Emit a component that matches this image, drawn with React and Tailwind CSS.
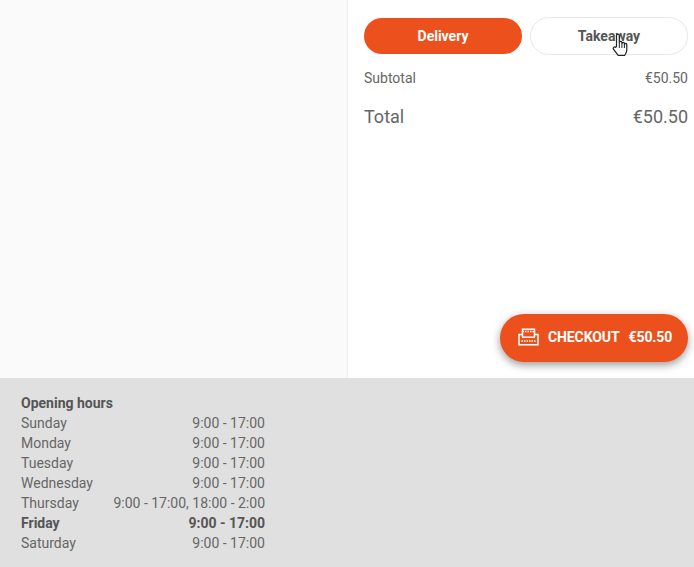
const HOURS = [
  ['Sunday', '9:00 - 17:00'],
  ['Monday', '9:00 - 17:00'],
  ['Tuesday', '9:00 - 17:00'],
  ['Wednesday', '9:00 - 17:00'],
  ['Thursday', '9:00 - 17:00, 18:00 - 2:00'],
  ['Friday', '9:00 - 17:00', true],
  ['Saturday', '9:00 - 17:00'],
]

const HandCursor = () => (
  <svg width="17" height="24" viewBox="0 0 17 24" className="absolute left-[612px] top-[33px]">
    <path
      d="M4.5 13.5V2.6c0-2 2.8-2 2.8 0v7c0-1.6 2.6-1.6 2.6 0v.9c0-1.5 2.5-1.5 2.5 0v1c0-1.4 2.4-1.4 2.4 0v5.2c0 2.8-1.2 4-2 5.6H6.2L1.6 16.4c-1.2-1.6.7-3.2 2-2z"
      fill="#fff"
      stroke="#222"
      strokeWidth="1.2"
      strokeLinejoin="round"
    />
    <path d="M7.3 10v5M9.9 10.5v4.5M12.4 11.5V15" stroke="#222" strokeWidth="1" fill="none" />
  </svg>
)

const RegisterIcon = () => (
  <svg width="21" height="18" viewBox="0 0 21 18" fill="none" stroke="#fff" strokeWidth="1.5">
    <path d="M4.5 9V1.2h12V9" />
    <path d="M4.5 3.5h12" strokeDasharray="1.5 1" />
    <path d="M4.5 6.5H1v10.3h19V6.5h-3.5" />
    <path d="M4 9.2h13" />
    <path d="M3.5 13h14" strokeDasharray="1.5 1" />
  </svg>
)

export default function App() {
  return (
    <div className="relative flex h-[567px] w-[694px] flex-col overflow-hidden bg-white font-['Roboto',sans-serif] text-[#555]">
      <div className="flex h-[378px]">
        <div className="w-[348px] shrink-0 border-r border-[#eeeeee] bg-[#fafafa]" />
        <div className="flex-1 pl-4 pr-[6px] pt-[17px]">
          <div className="grid grid-cols-2 gap-2">
            <button className="mt-px h-[36px] rounded-full bg-[#ec501c] text-sm font-bold text-white">Delivery</button>
            <button className="h-[38px] rounded-full border border-[#e8e8e8] bg-white pb-px text-sm font-bold text-[#555]">Takeaway</button>
          </div>
          <div className="mt-[13px] flex justify-between text-sm leading-5 text-[#666]">
            <span>Subtotal</span>
            <span>€50.50</span>
          </div>
          <div className="mt-[17px] flex justify-between text-lg leading-6 text-[#666]">
            <span>Total</span>
            <span>€50.50</span>
          </div>
        </div>
      </div>

      <div className="flex-1 bg-[#e0e0e0] pl-[21px] pt-[15px] text-sm leading-5">
        <div className="font-bold">Opening hours</div>
        <div className="w-[244px]">
          {HOURS.map(([day, time, today]) => (
            <div key={day} className={today ? 'flex justify-between font-bold' : 'flex justify-between text-[#666]'}>
              <span>{day}</span>
              <span>{time}</span>
            </div>
          ))}
        </div>
      </div>

      <button className="absolute left-[500px] top-[314px] flex h-[48px] w-[188px] items-center rounded-full bg-[#ec501c] pb-[2px] pl-[18px] text-sm font-bold tracking-[-0.1px] text-white shadow-[0_3px_8px_rgba(0,0,0,0.4)]">
        <RegisterIcon />
        <span className="ml-[9px]">CHECKOUT</span>
        <span className="ml-[9px]">€50.50</span>
      </button>
      <HandCursor />
    </div>
  )
}
